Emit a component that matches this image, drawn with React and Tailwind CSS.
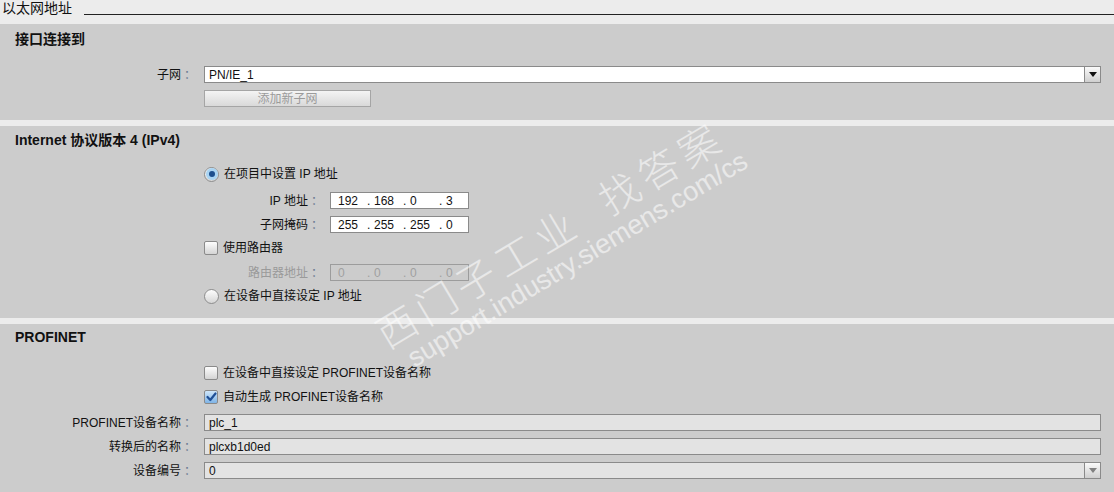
const font = 'font-["Liberation_Sans","Noto_Sans_CJK_SC",sans-serif]'

function Radio({ checked }) {
  return (
    <span className="w-[15px] h-[15px] rounded-full border border-[#8d8d8d] bg-gradient-to-b from-[#fdfdfd] to-[#d6d6d6] flex items-center justify-center shrink-0">
      {checked && (
        <span className="w-[12px] h-[12px] rounded-full bg-[#a9d4f3] flex items-center justify-center">
          <span className="w-[6px] h-[6px] rounded-full bg-[#1d4f8e]" />
        </span>
      )}
    </span>
  )
}

function Check({ checked }) {
  return (
    <span className={`w-[14px] h-[14px] rounded-[2px] border border-[#8a8a8a] flex items-center justify-center shrink-0 ${checked ? 'bg-gradient-to-b from-[#cfe6fa] to-[#7fb4e6]' : 'bg-gradient-to-b from-[#fdfdfd] to-[#d4d4d4]'}`}>
      {checked && (
        <svg width="11" height="10" viewBox="0 0 11 10">
          <path d="M1.5 5 L4.3 8 L9.5 1.5" fill="none" stroke="#1f4f96" strokeWidth="2.2" strokeLinecap="round" strokeLinejoin="round" />
        </svg>
      )}
    </span>
  )
}

function Option({ type, checked, children, className = '' }) {
  return (
    <div className={`flex items-center h-[16px] pl-[204px] gap-[5px] ${className}`}>
      {type === 'radio' ? <Radio checked={checked} /> : <Check checked={checked} />}
      <span className="text-[12px] text-[#111] leading-none">{children}</span>
    </div>
  )
}

function Label({ children, width = 'w-[196px]', muted }) {
  return (
    <div className={`${width} shrink-0 text-right text-[12px] ${muted ? 'text-[#9a9a9a]' : 'text-[#111]'}`}>
      {children}<span className="ml-[3px] text-[#6a7a90]">：</span>
    </div>
  )
}

function DropArrow({ muted }) {
  return (
    <div className="w-[16px] h-full border-l border-[#8a8a8a] bg-gradient-to-b from-[#fafafa] to-[#cfcfcf] flex items-center justify-center">
      <svg width="8" height="5" viewBox="0 0 8 5">
        <path d="M0 0 H8 L4 5 Z" fill={muted ? '#808080' : '#111'} />
      </svg>
    </div>
  )
}

function FieldRow({ label, value, white, dropdown, className = '' }) {
  return (
    <div className={`flex items-center h-[17px] ${className}`}>
      <Label>{label}</Label>
      <div className={`ml-[8px] mr-[13px] flex-1 h-[17px] border border-[#8a8a8a] flex items-center ${white ? 'bg-white' : 'bg-[#e3e3e3]'}`}>
        <span className="flex-1 pl-[4px] text-[12px] text-[#111] leading-none">{value}</span>
        {dropdown && <DropArrow muted={!white} />}
      </div>
    </div>
  )
}

function IpField({ parts, muted }) {
  return (
    <div className={`ml-[7px] w-[139px] h-[17px] border flex items-center pl-[7px] text-[12px] leading-none ${muted ? 'border-[#9c9c9c] text-[#a0a0a0]' : 'border-[#8a8a8a] bg-white text-[#111]'}`}>
      {parts.map((p, i) => (
        <div key={i} className="flex w-[36px] shrink-0">
          <span className="w-[29px]">{p}</span>
          {i < 3 && <span>.</span>}
        </div>
      ))}
    </div>
  )
}

function IpRow({ label, parts, muted, className = '' }) {
  return (
    <div className={`flex items-center h-[17px] ${className}`}>
      <Label width="w-[323px]" muted={muted}>{label}</Label>
      <IpField parts={parts} muted={muted} />
    </div>
  )
}

export default function App() {
  return (
    <div className={`${font} w-[1114px] h-[492px] bg-[#ececec] relative overflow-hidden`}>
      <div className="h-[24px] flex items-start">
        <span className="pl-[2px] text-[14px] leading-[16px] text-[#111]">以太网地址</span>
        <div className="flex-1 ml-[12px] mt-[14px] h-px bg-[#222]" />
      </div>

      <div className="h-[96px] bg-[#cccccc] overflow-hidden">
        <div className="mt-[5px] pl-[15px] h-[20px] text-[14px] font-bold text-[#111] leading-[20px]">接口连接到</div>
        <FieldRow className="mt-[17px]" label="子网" value="PN/IE_1" white dropdown />
        <div className="mt-[7px] ml-[204px] w-[167px] h-[17px] border border-[#a5a5a5] bg-gradient-to-b from-[#f4f4f4] to-[#d9d9d9] flex items-center justify-center text-[12px] text-[#9b9b9b] leading-none">
          添加新子网
        </div>
      </div>

      <div className="h-[6px]" />

      <div className="h-[192px] bg-[#cccccc] overflow-hidden">
        <div className="mt-[4px] pl-[15px] h-[20px] text-[14px] font-bold text-[#111] leading-[20px]">Internet 协议版本 4 (IPv4)</div>
        <Option className="mt-[16px]" type="radio" checked>在项目中设置 IP 地址</Option>
        <IpRow className="mt-[10px]" label="IP 地址" parts={['192', '168', '0', '3']} />
        <IpRow className="mt-[7px]" label="子网掩码" parts={['255', '255', '255', '0']} />
        <Option className="mt-[7px]" type="check">使用路由器</Option>
        <IpRow className="mt-[8px]" label="路由器地址" parts={['0', '0', '0', '0']} muted />
        <Option className="mt-[7px]" type="radio">在设备中直接设定 IP 地址</Option>
      </div>

      <div className="h-[6px]" />

      <div className="h-[168px] bg-[#cccccc] overflow-hidden">
        <div className="mt-[3px] pl-[15px] h-[20px] text-[14px] font-bold text-[#111] leading-[20px]">PROFINET</div>
        <Option className="mt-[18px]" type="check">在设备中直接设定 PROFINET设备名称</Option>
        <Option className="mt-[8px]" type="check" checked>自动生成 PROFINET设备名称</Option>
        <FieldRow className="mt-[9px]" label="PROFINET设备名称" value="plc_1" />
        <FieldRow className="mt-[7px]" label="转换后的名称" value="plcxb1d0ed" />
        <FieldRow className="mt-[7px]" label="设备编号" value="0" dropdown />
      </div>

      {/* watermark */}
      <div className="absolute left-[355px] top-[198px] w-[440px] -rotate-[31deg] origin-center pointer-events-none text-white/55 select-none">
        <div className="text-[40px] leading-[44px] tracking-[6px] whitespace-nowrap font-['Noto_Sans_CJK_SC',sans-serif] font-light">西门子工业&nbsp;&nbsp;找答案</div>
        <div className="text-[27px] leading-[30px] whitespace-nowrap pl-[14px]">support.industry.siemens.com/cs</div>
      </div>
    </div>
  )
}
